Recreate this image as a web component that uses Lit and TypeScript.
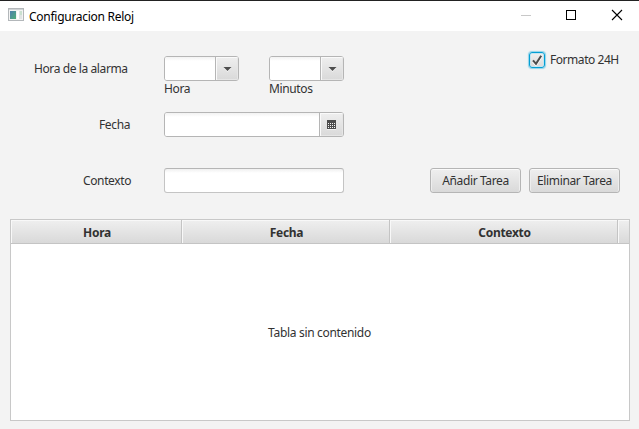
import { LitElement, html, css, svg } from "lit";
import { customElement, property } from "lit/decorators.js";

@customElement("combo-field")
class ComboField extends LitElement {
  @property() icon = "arrow";
  static styles = css`
    :host { display: flex; box-sizing: border-box; height: 25px; border: 1px solid #b5b5b5; border-radius: 3px; overflow: hidden; background: #fff; }
    .value { flex: 1; background: linear-gradient(#f2f2f2, #fff 4px); }
    .drop { box-sizing: border-box; width: 23px; border-left: 1px solid #b5b5b5; display: flex; align-items: center; justify-content: center;
      background: linear-gradient(#efefef, #d9d9d9); box-shadow: inset 1px 1px 0 #fafafa, inset -1px -1px 0 #e6e6e6; }
    .date { width: 24px; }
    svg { display: block; }
  `;
  render() {
    const cal = this.icon === "calendar";
    const dots = [3, 5, 7].flatMap((y) => [1, 3, 5, 7].map((x) => svg`<rect x=${x} y=${y} width="1" height="1" fill="#f4f4f4"/>`));
    return html`<div class="value"></div>
      <div class="drop ${cal ? "date" : ""}">
        ${cal
          ? html`<svg width="9" height="10" shape-rendering="crispEdges"><rect width="9" height="9" fill="#4d4d4d"/><rect y="9" width="9" height="1" fill="#f4f4f4"/>${dots}</svg>`
          : html`<svg width="9" height="6"><path d="M0.5 2 H8.5 L4.5 6 Z" fill="#f6f6f6"/><path d="M0.5 1 H8.5 L4.5 5 Z" fill="#4d4d4d"/></svg>`}
      </div>`;
  }
}

@customElement("app-root")
class AppRoot extends LitElement {
  static styles = css`
    :host { display: flex; flex-direction: column; box-sizing: border-box; width: 639px; height: 429px; overflow: hidden;
      background: #f3f3f3; color: #323232; font: 12px/16px "Noto Sans", "Open Sans", sans-serif; letter-spacing: -0.37px; white-space: nowrap; }
    .titlebar { box-sizing: border-box; height: 31px; border-top: 1px solid #222; background: #fff; color: #000; display: flex; align-items: center; padding-left: 8px; }
    .title { margin-left: 5px; flex: 1; letter-spacing: -0.27px; padding-top: 1px; }
    .titlebar svg { display: block; }
    .app { margin-bottom: 2px; }
    .form { height: 188px; box-sizing: border-box; padding: 25px 19px 0 0; display: flex; justify-content: space-between; }
    .fields { display: flex; flex-direction: column; }
    .row { display: flex; flex: none; height: 56px; }
    .name { box-sizing: border-box; width: 164px; line-height: 26px; }
    .alarm { padding-left: 34px; letter-spacing: -0.4px; }
    .day { padding-left: 99px; }
    .context { padding-left: 83px; }
    .unit { width: 75px; margin-right: 30px; }
    .wide { width: 180px; }
    .text { box-sizing: border-box; width: 180px; height: 25px; border: 1px solid #c4c4c4; border-top-color: #b5b5b5; border-radius: 3px; background: linear-gradient(#f0f0f0, #fff 4px); }
    .actions { display: flex; flex-direction: column; justify-content: space-between; align-items: flex-end; padding-bottom: 26px; margin-top: -4px; }
    .check { display: flex; align-items: center; }
    .box { box-sizing: border-box; width: 16px; height: 16px; border: 1px solid #039ed3; border-radius: 3px; margin-right: 5px;
      background: linear-gradient(#f0f0f0, #dadada); box-shadow: 0 0 1px 1px #8fd3ea, inset 0 0 0 1px #c4e5f1; }
    .box svg { display: block; }
    .caption { width: 70px; letter-spacing: -0.45px; }
    .buttons { display: flex; gap: 8px; }
    button { box-sizing: border-box; width: 91px; height: 25px; padding: 1px 0 0; border: 1px solid #b5b5b5; border-radius: 3px; color: inherit; font: inherit; letter-spacing: inherit; white-space: nowrap;
      background: linear-gradient(#efefef, #d9d9d9); box-shadow: inset 0 1px 0 #fafafa, inset 1px 0 0 #eee, inset -1px 0 0 #eee; }
    .table { box-sizing: border-box; margin: 0 9px 8px 10px; flex: 1; border: 1px solid #c8c8c8; background: #fff; display: flex; flex-direction: column; }
    .head { display: grid; grid-template: 24px / 171px 208px 228px 1fr; flex: none; font-weight: 700; line-height: 26px; text-align: center; letter-spacing: -0.3px; }
    .head div { box-sizing: border-box; padding-left: 2px; border-right: 1px solid #c4c4c4; border-bottom: 1px solid #c4c4c4; background: linear-gradient(#efefef, #d9d9d9); box-shadow: inset 1px 1px 0 #f8f8f8; height: 24px; }
    .head div:last-child { border-right: 0; }
    .empty { flex: 1; display: flex; align-items: center; justify-content: center; padding: 2px 1px 0 0; letter-spacing: -0.32px; }
  `;
  render() {
    return html`
      <div class="titlebar">
        <svg class="app" width="16" height="14"><defs><linearGradient id="g" x2="1" y2="1"><stop stop-color="#4f7fae"/><stop offset="1" stop-color="#4fae78"/></linearGradient></defs>
          <rect x=".5" y=".5" width="15" height="12" fill="#f3f3f3" stroke="#b3b7ba"/><rect x="1" y="1" width="14" height="1" fill="#cfd3d5"/>
          <rect x="2" y="3" width="6" height="8" fill="url(#g)"/><rect x="9" y="3" width="2" height="8" fill="#fff"/><rect x="11" y="3" width="3" height="8" fill="#e0e4e4"/><rect x="12" y="3" width="2" height="4" fill="#c9e0cf"/></svg>
        <div class="title">Configuracion Reloj</div>
        <svg width="139" height="30" fill="none">
          <path d="M21 14.5H31" stroke="#c8c8c8"/><rect x="66.5" y="9.5" width="9" height="9" stroke="#000"/><path d="M112 9L122 19M122 9L112 19" stroke="#000" stroke-width="1.1"/></svg>
      </div>
      <div class="form">
        <div class="fields">
          <div class="row"><div class="name alarm">Hora de la alarma</div>
            <div class="unit"><combo-field></combo-field>Hora</div><div class="unit"><combo-field></combo-field>Minutos</div></div>
          <div class="row"><div class="name day">Fecha</div><combo-field class="wide" icon="calendar"></combo-field></div>
          <div class="row"><div class="name context">Contexto</div><div class="text"></div></div>
        </div>
        <div class="actions">
          <div class="check"><div class="box"><svg width="14" height="14"><path d="M3 7.5L6 11L11.2 3" fill="none" stroke="#fff" stroke-width="2" transform="translate(0 1)"/><path d="M3 7.3L6 10.8L11.2 2.7" fill="none" stroke="#4d4d4d" stroke-width="2"/></svg></div><span class="caption">Formato 24H</span></div>
          <div class="buttons"><button>Añadir Tarea</button><button>Eliminar Tarea</button></div>
        </div>
      </div>
      <div class="table">
        <div class="head"><div>Hora</div><div>Fecha</div><div>Contexto</div><div></div></div>
        <div class="empty">Tabla sin contenido</div>
      </div>`;
  }
}
